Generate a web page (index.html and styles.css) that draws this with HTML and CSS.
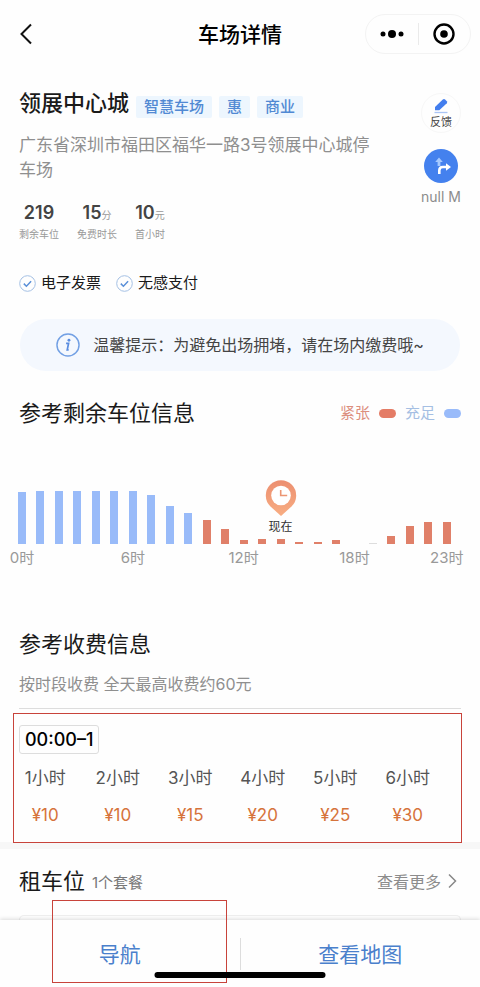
FILE: index.html
```html
<!DOCTYPE html>
<html lang="zh-CN">
<head>
<meta charset="utf-8">
<meta name="viewport" content="width=device-width, initial-scale=1">
<title>车场详情</title>
<link rel="stylesheet" href="styles.css">
</head>
<body>
<header class="topbar">
  <button class="back" type="button" aria-label="返回">
    <svg width="12" height="22" viewBox="0 0 12 22"><path d="M11 1.500 1.500 11 11 20.500"/></svg>
  </button>
  <h1 class="topbar-title">车场详情</h1>
  <div class="capsule">
    <button class="capsule-btn" type="button" aria-label="更多">
      <svg width="26" height="10" viewBox="0 0 26 10"><circle cx="4" cy="5" r="2.500"/><circle cx="13" cy="5" r="4"/><circle cx="22" cy="5" r="2.500"/></svg>
    </button>
    <button class="capsule-btn" type="button" aria-label="关闭">
      <svg width="22" height="22" viewBox="0 0 22 22"><circle cx="11" cy="11" r="9.500" fill="none" stroke="#000" stroke-width="2.400"/><circle cx="11" cy="11" r="3.800"/></svg>
    </button>
  </div>
</header>

<main>
  <section class="info">
    <div class="info-main">
      <div class="name-row">
        <h2 class="name">领展中心城</h2>
        <span class="tag">智慧车场</span>
        <span class="tag">惠</span>
        <span class="tag">商业</span>
      </div>
      <p class="address">广东省深圳市福田区福华一路3号领展中心城停车场</p>
      <ul class="stats">
        <li><strong>219</strong><span class="stat-label">剩余车位</span></li>
        <li><strong>15<small>分</small></strong><span class="stat-label">免费时长</span></li>
        <li><strong>10<small>元</small></strong><span class="stat-label">首小时</span></li>
      </ul>
      <ul class="features">
        <li><svg width="17" height="17" viewBox="0 0 17 17"><circle cx="8.500" cy="8.500" r="7.800"/><path d="m4.800 8.600 2.600 2.600 4.700-4.900"/></svg>电子发票</li>
        <li><svg width="17" height="17" viewBox="0 0 17 17"><circle cx="8.500" cy="8.500" r="7.800"/><path d="m4.800 8.600 2.600 2.600 4.700-4.900"/></svg>无感支付</li>
      </ul>
    </div>
    <div class="actions">
      <button class="feedback" type="button">
        <svg width="16" height="16" viewBox="0 0 16 16"><path d="M2 12.300V9L9.800 1.500q1.200-1 2.300 0l1.700 1.800q.8 1 0 2L6.300 12.300z" fill="#437eee"/><path d="M1.500 14.500h13" stroke="#a9c4f5" stroke-width="1.300"/></svg>
        反馈
      </button>
      <button class="route" type="button" aria-label="路线">
        <svg width="34" height="34" viewBox="0 0 34 34"><circle cx="17" cy="17" r="17" fill="#4481ee"/><path d="M15 8.500l3.800 4.500h-2.400v4h-2.800v-4h-2.400z" fill="#a5c9ff"/><path d="M15.300 25v-3.500q0-3.500 3.500-3.500H23" fill="none" stroke="#fff" stroke-width="2.600"/><path d="M22 14.200v7.600l5-3.800z" fill="#fff"/></svg>
      </button>
      <span class="distance">null M</span>
    </div>
  </section>

  <p class="notice">
    <svg width="24" height="24" viewBox="0 0 25 25"><circle cx="12.500" cy="12.500" r="11.500" fill="none" stroke="#72a0e4" stroke-width="1.500"/><circle cx="13.500" cy="7.600" r="1.500" fill="#5a8de0"/><path d="M10.500 10.800h2.600l-1.400 6.700h1.500" fill="none" stroke="#5a8de0" stroke-width="1.800"/></svg>
    <span>温馨提示：为避免出场拥堵，请在场内缴费哦~</span>
  </p>

  <section class="spaces">
    <div class="section-head">
      <h2 class="section-title">参考剩余车位信息</h2>
      <div class="legend">
        <span class="busy">紧张</span><i class="pill pill-busy"></i>
        <span class="free">充足</span><i class="pill pill-free"></i>
      </div>
    </div>
    <ol class="chart">
      <li><i class="bar" style="height:52px"></i><span>0时</span></li>
      <li><i class="bar" style="height:53px"></i><span></span></li>
      <li><i class="bar" style="height:53px"></i><span></span></li>
      <li><i class="bar" style="height:53px"></i><span></span></li>
      <li><i class="bar" style="height:53px"></i><span></span></li>
      <li><i class="bar" style="height:53px"></i><span></span></li>
      <li><i class="bar" style="height:53px"></i><span>6时</span></li>
      <li><i class="bar" style="height:49px"></i><span></span></li>
      <li><i class="bar" style="height:38px"></i><span></span></li>
      <li><i class="bar" style="height:31px"></i><span></span></li>
      <li><i class="bar bar-busy" style="height:24px"></i><span></span></li>
      <li><i class="bar bar-busy" style="height:15px"></i><span></span></li>
      <li><i class="bar bar-busy" style="height:4px"></i><span>12时</span></li>
      <li><i class="bar bar-busy" style="height:5px"></i><span></span></li>
      <li>
        <svg class="pin" width="32" height="36" viewBox="0 0 32 36"><defs><linearGradient id="pin-fill" x2="0" y2="1"><stop stop-color="#ec8f70"/><stop offset="1" stop-color="#f8ad82"/></linearGradient></defs><path d="M16 36 5.500 26.500A15.200 15.200 0 1 1 26.500 26.500z" fill="url(#pin-fill)"/><circle cx="16" cy="15.500" r="9.800" fill="#fff"/><path d="M15.700 10v5.500h6.500" fill="none" stroke="#ec9673" stroke-width="1.600"/></svg>
        <b class="now">现在</b><i class="bar bar-busy" style="height:5px"></i><span></span>
      </li>
      <li><i class="bar bar-busy" style="height:2px"></i><span></span></li>
      <li><i class="bar bar-busy" style="height:2px"></i><span></span></li>
      <li><i class="bar bar-busy" style="height:4px"></i><span></span></li>
      <li><span>18时</span></li>
      <li><i class="bar bar-none" style="height:1px"></i><span></span></li>
      <li><i class="bar bar-busy" style="height:8px"></i><span></span></li>
      <li><i class="bar bar-busy" style="height:18px"></i><span></span></li>
      <li><i class="bar bar-busy" style="height:22px"></i><span></span></li>
      <li><i class="bar bar-busy" style="height:22px"></i><span>23时</span></li>
    </ol>
  </section>

  <section class="fees">
    <div class="fees-head">
      <h2 class="section-title">参考收费信息</h2>
      <p class="fees-note">按时段收费 全天最高收费约60元</p>
    </div>
    <div class="fees-box">
      <span class="period">00:00–1</span>
      <table class="fee-table">
        <thead><tr><th>1小时</th><th>2小时</th><th>3小时</th><th>4小时</th><th>5小时</th><th>6小时</th></tr></thead>
        <tbody><tr><td>¥10</td><td>¥10</td><td>¥15</td><td>¥20</td><td>¥25</td><td>¥30</td></tr></tbody>
      </table>
    </div>
  </section>

  <section class="rent">
    <div class="rent-head">
      <h2 class="section-title">租车位</h2>
      <span class="rent-count">1个套餐</span>
      <a class="more" href="#">查看更多
        <svg width="9" height="16" viewBox="0 0 9 16"><path d="m1 1.500 6.500 6.500L1 14.500"/></svg>
      </a>
    </div>
    <div class="rent-card"></div>
  </section>
</main>

<footer class="bottombar">
  <button class="bottom-btn" type="button">导航</button>
  <button class="bottom-btn" type="button">查看地图</button>
  <i class="highlight"></i>
  <i class="home-indicator"></i>
</footer>
</body>
</html>
```
FILE: styles.css
```css
* {
  box-sizing: border-box;
}

body {
  margin: 0;
  background: #fefefe;
  color: #1a1a1a;
  font-family: Inter, "Noto Sans CJK SC", sans-serif;
  font-size: 16px;
}

h1, h2, p, ul, ol {
  margin: 0;
  padding: 0;
  list-style: none;
}

button {
  padding: 0;
  border: 0;
  background: none;
  color: inherit;
  font-family: inherit;
}

svg {
  display: block;
  flex: none;
}

/* Top bar */
.topbar {
  display: grid;
  grid-template-columns: 106px 1fr 106px;
  align-items: center;
  padding: 14px 9px 0;
}

.back {
  justify-self: start;
  padding-left: 11px;
}

.back path {
  fill: none;
  stroke: #111;
  stroke-width: 2;
}

.topbar-title {
  padding-top: 2px;
  color: #000;
  font-size: 21px;
  font-weight: 500;
  line-height: 30px;
  text-align: center;
}

.capsule {
  display: flex;
  height: 40px;
  border: 1px solid #f3f3f3;
  border-radius: 20px;
}

.capsule-btn {
  display: grid;
  flex: 1;
  place-items: center;
  position: relative;
}

.capsule-btn + .capsule-btn::before {
  content: "";
  position: absolute;
  left: 0;
  top: 8px;
  bottom: 8px;
  width: 1px;
  background: #eaeaea;
}

/* Car park summary */
.info {
  display: flex;
  gap: 40px;
  padding: 34px 19px 0;
}

.info-main {
  flex: 1;
}

.name-row {
  display: flex;
  align-items: flex-end;
  gap: 7px;
}

.name {
  font-size: 22px;
  font-weight: 500;
  line-height: 30px;
}

.tag {
  padding: 0 8px;
  border-radius: 2px;
  background: #edf6fe;
  color: #5189d3;
  font-size: 15px;
  font-weight: 500;
  line-height: 22px;
}

.address {
  margin-top: 15px;
  color: #8f8f8f;
  font-size: 17px;
  line-height: 25px;
}

.stats {
  display: flex;
  gap: 18px;
  margin-top: 18px;
}

.stats li {
  display: grid;
  gap: 2px;
  justify-items: center;
}

.stats strong {
  height: 24px;
  color: #444;
  font-size: 18px;
  font-weight: 600;
  line-height: 24px;
}

.stats small {
  color: #999;
  font-size: 10px;
  font-weight: 400;
  line-height: 10px;
}

.stat-label {
  color: #999;
  font-size: 10px;
  line-height: 14px;
}

.features {
  display: flex;
  gap: 15px;
  margin-top: 32px;
}

.features li {
  display: flex;
  align-items: center;
  gap: 5px;
  font-size: 15px;
  line-height: 20px;
}

.features svg {
  fill: none;
  stroke: #a4c0e4;
}

.features path {
  stroke: #5a8fd8;
  stroke-width: 1.5;
}

.actions {
  display: flex;
  flex-direction: column;
  align-items: center;
  width: 40px;
  padding-top: 5px;
}

.feedback {
  display: flex;
  flex-direction: column;
  align-items: center;
  width: 40px;
  height: 40px;
  padding-top: 4px;
  border: 1px solid #f7f7f7;
  border-radius: 20px;
  color: #444;
  font-size: 11px;
  line-height: 16px;
  white-space: nowrap;
}

.route {
  margin-top: 16px;
}

.distance {
  margin-top: 4px;
  color: #8c8c8c;
  font-size: 14px;
  line-height: 20px;
  white-space: nowrap;
}

.notice {
  display: flex;
  align-items: center;
  justify-content: center;
  gap: 13px;
  margin: 26px 20px 0;
  padding: 14px 0;
  border-radius: 26px;
  background: #f4f8fe;
  color: #444;
  line-height: 24px;
}

/* Free spaces by hour */
.spaces {
  padding: 27px 19px 0;
}

.section-head {
  display: flex;
  align-items: center;
  justify-content: space-between;
}

.section-title {
  font-size: 22px;
  font-weight: 400;
  line-height: 30px;
}

.legend {
  display: flex;
  align-items: center;
  gap: 9px;
  font-size: 15px;
  line-height: 20px;
}

.busy {
  color: #dc8f7e;
}

.free {
  color: #a5bfe3;
}

.pill {
  width: 17px;
  height: 9px;
  border-radius: 5px;
}

.pill-busy {
  background: #e47c66;
}

.pill-free {
  background: #99bbfa;
}

.chart {
  display: flex;
  justify-content: space-between;
  margin: 52px 10px 0 -1px;
}

.chart li {
  display: flex;
  flex-direction: column;
  align-items: center;
  justify-content: flex-end;
  width: 8px;
  height: 88px;
}

.bar {
  flex: none;
  width: 8px;
  background: #99bbf9;
}

.bar-busy {
  background: #e08069;
}

.bar-none {
  background: #ddd;
}

.chart span {
  flex: none;
  height: 20px;
  margin-top: 4px;
  color: #999;
  font-size: 15px;
  line-height: 20px;
  white-space: nowrap;
}

.now {
  margin: 3px 0 4px;
  color: #333;
  font-size: 12px;
  font-weight: 400;
  line-height: 16px;
  white-space: nowrap;
}

/* Fees */
.fees {
  padding-top: 61px;
}

.fees-head {
  margin: 0 19px;
  padding-bottom: 12px;
  border-bottom: 1px solid #ddd;
}

.fees-note {
  margin-top: 13px;
  color: #8f8f8f;
  line-height: 24px;
}

.fees-box {
  position: relative;
  z-index: 1;
  margin: 4px 18px -1px 13px;
  padding: 11px 17px 8px 5px;
  border: 1px solid #c8433b;
}

.period {
  display: block;
  width: fit-content;
  padding: 0 5px;
  border: 1px solid #ddd;
  border-radius: 3px;
  color: #000;
  font-size: 18px;
  font-weight: 500;
  line-height: 27px;
}

.fee-table {
  width: calc(100% + 10px);
  margin: 6px 0 0 -10px;
  border-collapse: collapse;
  table-layout: fixed;
  font-size: 17px;
  line-height: 24px;
}

.fee-table th,
.fee-table td {
  padding: 6px 0 7px;
  font-weight: 400;
  text-align: center;
}

.fee-table th {
  color: #555;
}

.fee-table td {
  color: #d6733b;
}

/* Rental packages */
.rent {
  padding: 17px 19px 0;
  border-top: 7px solid #f7f7f7;
}

.rent-head {
  display: flex;
  align-items: center;
  gap: 7px;
}

.rent-count {
  color: #777;
  font-size: 15px;
}

.more {
  display: flex;
  align-items: center;
  gap: 7px;
  margin: 0 4px 0 auto;
  color: #8c8c8c;
  text-decoration: none;
}

.more path {
  fill: none;
  stroke: #888;
  stroke-width: 1.5;
}

.rent-card {
  height: 5px;
  margin-top: 19px;
  border: 1px solid #eee;
  border-bottom: 0;
  border-radius: 8px 8px 0 0;
}

/* Bottom bar */
.bottombar {
  display: flex;
  position: relative;
  z-index: 1;
  padding: 18px 0 17px;
  background: #fefefe;
  box-shadow: 0 -1px 4px rgba(0, 0, 0, 0.14);
}

.bottom-btn {
  flex: 1;
  padding-top: 2px;
  color: #4a80cc;
  font-size: 21px;
  line-height: 30px;
}

.bottom-btn + .bottom-btn {
  border-left: 1px solid #ddd;
}

.highlight {
  position: absolute;
  left: 52px;
  top: -20px;
  bottom: 4px;
  width: 175px;
  border: 1px solid #c8433b;
}

.home-indicator {
  position: absolute;
  left: 50%;
  bottom: 9px;
  width: 171px;
  height: 6px;
  border-radius: 3px;
  background: #000;
  transform: translateX(-50%);
}
```
